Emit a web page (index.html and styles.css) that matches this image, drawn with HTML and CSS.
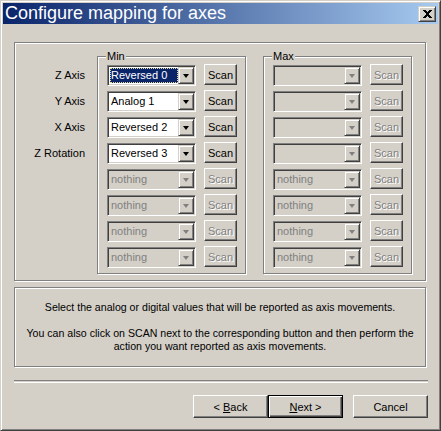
FILE: index.html
```html
<!DOCTYPE html>
<html lang="en">
<head>
    <meta charset="UTF-8">
    <title>Configure mapping for axes</title>
    <link rel="stylesheet" href="styles.css">
</head>
<body>
    <div class="window">
        <div class="titlebar">
            <span class="title">Configure mapping for axes</span>
            <button class="close" title="Close">
                <svg width="9" height="8" viewBox="0 0 9 8" shape-rendering="crispEdges">
                    <path d="M0 0h2.5l2 2.5 2-2.5h2.5l-3.2 4 3.2 4h-2.5l-2-2.5-2 2.5h-2.5l3.2-4z" fill="#000"/>
                </svg>
            </button>
        </div>

        <div class="content">
            <!-- axis mapping -->
            <div class="panel mapping">
                <div class="labels">
                    <span>Z Axis</span>
                    <span>Y Axis</span>
                    <span>X Axis</span>
                    <span>Z Rotation</span>
                    <span></span>
                    <span></span>
                    <span></span>
                    <span></span>
                </div>

                <fieldset class="group">
                    <legend>Min</legend>
                    <div class="row">
                        <div class="combo"><span class="value selected"><span>Reversed 0</span></span><span class="drop"><i class="arrow"></i></span></div>
                        <button class="btn scan">Scan</button>
                    </div>
                    <div class="row">
                        <div class="combo"><span class="value">Analog 1</span><span class="drop"><i class="arrow"></i></span></div>
                        <button class="btn scan">Scan</button>
                    </div>
                    <div class="row">
                        <div class="combo"><span class="value">Reversed 2</span><span class="drop"><i class="arrow"></i></span></div>
                        <button class="btn scan">Scan</button>
                    </div>
                    <div class="row">
                        <div class="combo"><span class="value">Reversed 3</span><span class="drop"><i class="arrow"></i></span></div>
                        <button class="btn scan">Scan</button>
                    </div>
                    <div class="row">
                        <div class="combo disabled"><span class="value">nothing</span><span class="drop"><i class="arrow"></i></span></div>
                        <button class="btn scan disabled">Scan</button>
                    </div>
                    <div class="row">
                        <div class="combo disabled"><span class="value">nothing</span><span class="drop"><i class="arrow"></i></span></div>
                        <button class="btn scan disabled">Scan</button>
                    </div>
                    <div class="row">
                        <div class="combo disabled"><span class="value">nothing</span><span class="drop"><i class="arrow"></i></span></div>
                        <button class="btn scan disabled">Scan</button>
                    </div>
                    <div class="row">
                        <div class="combo disabled"><span class="value">nothing</span><span class="drop"><i class="arrow"></i></span></div>
                        <button class="btn scan disabled">Scan</button>
                    </div>
                </fieldset>

                <fieldset class="group max">
                    <legend>Max</legend>
                    <div class="row">
                        <div class="combo disabled"><span class="value"></span><span class="drop"><i class="arrow"></i></span></div>
                        <button class="btn scan disabled">Scan</button>
                    </div>
                    <div class="row">
                        <div class="combo disabled"><span class="value"></span><span class="drop"><i class="arrow"></i></span></div>
                        <button class="btn scan disabled">Scan</button>
                    </div>
                    <div class="row">
                        <div class="combo disabled"><span class="value"></span><span class="drop"><i class="arrow"></i></span></div>
                        <button class="btn scan disabled">Scan</button>
                    </div>
                    <div class="row">
                        <div class="combo disabled"><span class="value"></span><span class="drop"><i class="arrow"></i></span></div>
                        <button class="btn scan disabled">Scan</button>
                    </div>
                    <div class="row">
                        <div class="combo disabled"><span class="value">nothing</span><span class="drop"><i class="arrow"></i></span></div>
                        <button class="btn scan disabled">Scan</button>
                    </div>
                    <div class="row">
                        <div class="combo disabled"><span class="value">nothing</span><span class="drop"><i class="arrow"></i></span></div>
                        <button class="btn scan disabled">Scan</button>
                    </div>
                    <div class="row">
                        <div class="combo disabled"><span class="value">nothing</span><span class="drop"><i class="arrow"></i></span></div>
                        <button class="btn scan disabled">Scan</button>
                    </div>
                    <div class="row">
                        <div class="combo disabled"><span class="value">nothing</span><span class="drop"><i class="arrow"></i></span></div>
                        <button class="btn scan disabled">Scan</button>
                    </div>
                </fieldset>
            </div>

            <!-- help text -->
            <div class="panel info">
                <p>Select the analog or digital values that will be reported as axis movements.</p>
                <p>You can also click on SCAN next to the corresponding button and then perform the<br>action you want reported as axis movements.</p>
            </div>

            <div class="separator"></div>

            <div class="buttons">
                <button class="btn wizard">&lt; <u>B</u>ack</button>
                <button class="btn wizard default"><u>N</u>ext &gt;</button>
                <button class="btn wizard cancel">Cancel</button>
            </div>
        </div>
    </div>
</body>
</html>
```

FILE: styles.css
```css
body {
    margin: 0;
    font-family: 'Liberation Sans', Arial, sans-serif;
    font-size: 11px;
    color: #000;
}

.window {
    width: 441px;
    height: 431px;
    box-sizing: border-box;
    background-color: #d4d0c8;
    border: 1px solid;
    border-color: #d4d0c8 #404040 #404040 #d4d0c8;
    box-shadow: inset 1px 1px #fff, inset -1px -1px #808080;
    padding: 2px;
}

/* title bar */
.titlebar {
    height: 21px;
    display: flex;
    align-items: center;
    justify-content: space-between;
    background: linear-gradient(to right, #0a246a, #a6caf0);
    color: #fff;
}

.title {
    font-size: 18px;
    line-height: 21px;
    padding-left: 2px;
    white-space: nowrap;
}

.close {
    width: 18px;
    height: 16px;
    margin-right: 2px;
    padding: 0;
    display: flex;
    align-items: center;
    justify-content: center;
    background-color: #d4d0c8;
    border: 1px solid;
    border-color: #d4d0c8 #404040 #404040 #d4d0c8;
    box-shadow: inset 1px 1px #fff, inset -1px -1px #808080;
}

.content {
    padding: 18px 0 0 11px;
}

/* etched panels */
.panel {
    width: 412px;
    box-sizing: border-box;
    border: 1px solid #808080;
    box-shadow: inset 1px 1px #fff, 1px 1px #fff;
}

.mapping {
    display: flex;
    padding: 7px 0 6px 0;
}

.labels {
    width: 70px;
    margin-right: 12px;
    padding-top: 14px;
    display: flex;
    flex-direction: column;
    gap: 4px;
    text-align: right;
}

.labels span {
    height: 22px;
    line-height: 22px;
    white-space: nowrap;
}

.group {
    width: 149px;
    box-sizing: border-box;
    margin: 0;
    padding: 1px 8px 5px 9px;
    border: 1px solid #808080;
    box-shadow: inset 1px 1px #fff, 1px 1px #fff;
    display: flex;
    flex-direction: column;
    gap: 4px;
}

.group.max {
    margin-left: 17px;
}

.group legend {
    padding: 0 1px;
    margin-left: -1px;
    line-height: 13px;
    background-color: #d4d0c8;
}

.row {
    height: 22px;
    display: flex;
    align-items: flex-start;
    gap: 8px;
}

/* combo box */
.combo {
    width: 89px;
    height: 21px;
    margin-top: 1px;
    box-sizing: border-box;
    display: flex;
    padding: 1px;
    background-color: #fff;
    border: 1px solid;
    border-color: #808080 #fff #fff #808080;
    box-shadow: inset 1px 1px #404040, inset -1px -1px #d4d0c8;
}

.combo .value {
    flex: 1;
    display: flex;
    padding-left: 2px;
    line-height: 17px;
    white-space: nowrap;
    overflow: hidden;
}

.combo .value.selected {
    padding: 1px 0 1px 1px;
}

.combo .value.selected span {
    flex: 1;
    line-height: 13px;
    color: #fff;
    background-color: #0a246a;
    border: 1px dotted #e6d9a0;
}

.combo .drop {
    width: 16px;
    height: 17px;
    box-sizing: border-box;
    display: flex;
    align-items: center;
    justify-content: center;
    background-color: #d4d0c8;
    border: 1px solid;
    border-color: #d4d0c8 #404040 #404040 #d4d0c8;
    box-shadow: inset 1px 1px #fff, inset -1px -1px #808080;
}

.arrow {
    width: 0;
    height: 0;
    margin-top: 1px;
    border-left: 3.5px solid transparent;
    border-right: 3.5px solid transparent;
    border-top: 4px solid #000;
}

.combo.disabled {
    background-color: #d4d0c8;
    color: #808080;
}

.combo.disabled .arrow {
    border-top-color: #808080;
}

/* push buttons */
.btn {
    padding: 0;
    font-family: inherit;
    font-size: 11px;
    color: #000;
    background-color: #d4d0c8;
    border: 1px solid;
    border-color: #fff #404040 #404040 #fff;
    box-shadow: inset -1px -1px #808080;
}

.scan {
    width: 33px;
    height: 21px;
}

.btn.disabled {
    color: #808080;
    text-shadow: 1px 1px #fff;
}

/* help text */
.info {
    height: 80px;
    margin-top: 6px;
    padding-top: 13px;
    text-align: center;
    font-size: 10.6px;
    line-height: 13px;
}

.info p {
    margin: 0 0 13px 0;
    white-space: nowrap;
}

.separator {
    width: 414px;
    height: 1px;
    margin-top: 13px;
    border-top: 1px solid #808080;
    border-bottom: 1px solid #fff;
}

.buttons {
    width: 414px;
    margin-top: 12px;
    display: flex;
    justify-content: flex-end;
}

.wizard {
    width: 75px;
    height: 23px;
}

.wizard.default {
    border: 1px solid #000;
    box-shadow: inset 1px 1px #fff, inset -1px -1px #404040, inset -2px -2px #808080;
}

.wizard.cancel {
    margin-left: 10px;
}
```
